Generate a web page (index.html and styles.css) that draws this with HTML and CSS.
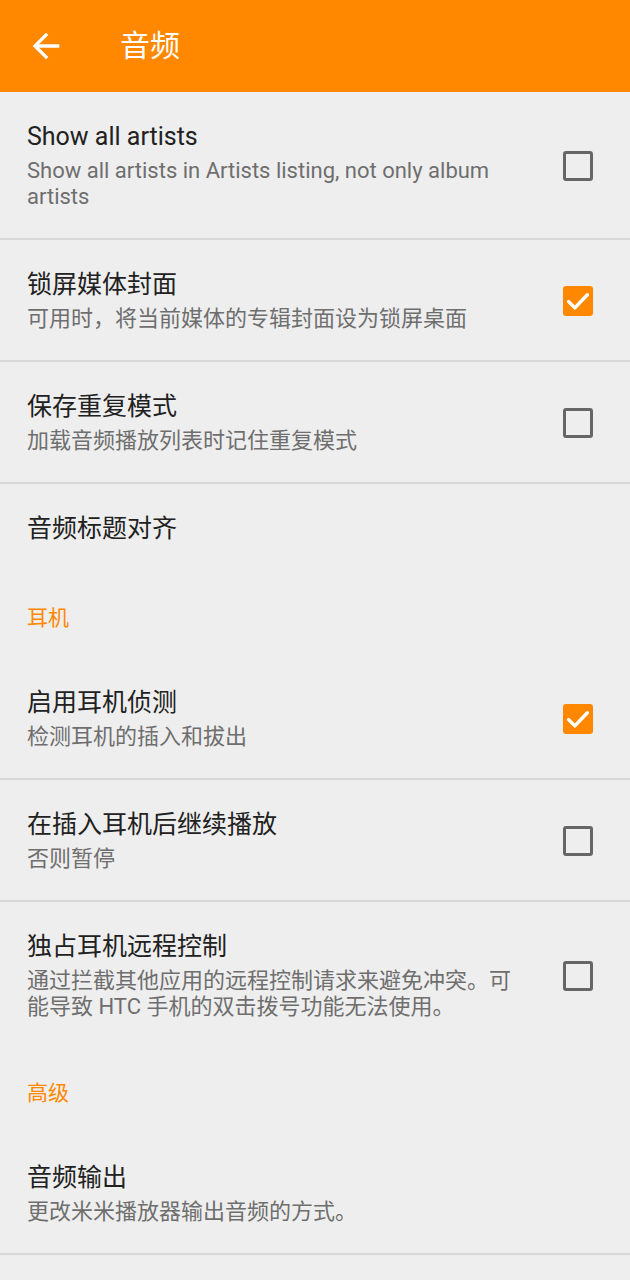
FILE: index.html
```html
<!DOCTYPE html>
<html lang="zh">
<head>
<meta charset="utf-8">
<title>音频</title>
<link rel="stylesheet" href="styles.css">
</head>
<body>
<header class="appbar">
  <svg class="back" viewBox="0 0 24 24" width="40" height="40"><path d="M20 11H7.83l5.59-5.59L12 4l-8 8 8 8 1.41-1.41L7.83 13H20v-2z" fill="#fff"/></svg>
  <h1 class="appbar-title">音频</h1>
</header>
<main class="list">
  <div class="pref divided">
    <div class="text">
      <div class="title">Show all artists</div>
      <div class="summary">Show all artists in Artists listing, not only album artists</div>
    </div>
    <span class="cb"></span>
  </div>
  <div class="pref divided">
    <div class="text">
      <div class="title">锁屏媒体封面</div>
      <div class="summary">可用时，将当前媒体的专辑封面设为锁屏桌面</div>
    </div>
    <span class="cb checked"><svg viewBox="0 0 24 24"><path d="M4.5 12.5l5 5L19.5 7" fill="none" stroke="#fff" stroke-width="2.8" stroke-linecap="round" stroke-linejoin="round"/></svg></span>
  </div>
  <div class="pref divided">
    <div class="text">
      <div class="title">保存重复模式</div>
      <div class="summary">加载音频播放列表时记住重复模式</div>
    </div>
    <span class="cb"></span>
  </div>
  <div class="pref">
    <div class="text">
      <div class="title">音频标题对齐</div>
    </div>
  </div>
  <div class="category">耳机</div>
  <div class="pref divided">
    <div class="text">
      <div class="title">启用耳机侦测</div>
      <div class="summary">检测耳机的插入和拔出</div>
    </div>
    <span class="cb checked"><svg viewBox="0 0 24 24"><path d="M4.5 12.5l5 5L19.5 7" fill="none" stroke="#fff" stroke-width="2.8" stroke-linecap="round" stroke-linejoin="round"/></svg></span>
  </div>
  <div class="pref divided">
    <div class="text">
      <div class="title">在插入耳机后继续播放</div>
      <div class="summary">否则暂停</div>
    </div>
    <span class="cb"></span>
  </div>
  <div class="pref">
    <div class="text">
      <div class="title">独占耳机远程控制</div>
      <div class="summary">通过拦截其他应用的远程控制请求来避免冲突。可能导致 HTC 手机的双击拨号功能无法使用。</div>
    </div>
    <span class="cb"></span>
  </div>
  <div class="category">高级</div>
  <div class="pref divided">
    <div class="text">
      <div class="title">音频输出</div>
      <div class="summary">更改米米播放器输出音频的方式。</div>
    </div>
  </div>
</main>
</body>
</html>
```
FILE: styles.css
```css
* { box-sizing: border-box; }
html, body {
  margin: 0;
  padding: 0;
  background: #eeeeee;
  font-family: Roboto, "Noto Sans CJK SC", sans-serif;
}
.appbar {
  height: 92px;
  background: #ff8800;
  display: flex;
  align-items: center;
  padding-left: 26px;
}
.back { display: block; flex: none; }
.appbar-title {
  margin: 0 0 0 54px;
  color: #fff;
  font-size: 30px;
  font-weight: 400;
  line-height: 40px;
}
.list { display: flex; flex-direction: column; }
.pref {
  display: flex;
  align-items: center;
  padding: 29px 37px 28px 27px;
}
.pref.divided { border-bottom: 2px solid #d8d8d8; }
.text { flex: 1; min-width: 0; margin-right: 44px; }
.title {
  font-size: 25px;
  line-height: 32px;
  color: #212121;
}
.summary {
  margin-top: 5px;
  font-size: 22px;
  line-height: 26px;
  color: #6e6e6e;
}
.cb {
  flex: none;
  width: 30px;
  height: 30px;
  border: 3.5px solid #666;
  border-radius: 3px;
  display: flex;
  align-items: center;
  justify-content: center;
}
.cb.checked {
  background: #ff8800;
  border-color: #ff8800;
}
.cb svg { width: 30px; height: 30px; display: block; flex: none; }
.category {
  padding: 32px 27px 27px;
  font-size: 21px;
  line-height: 26px;
  color: #ff8800;
}
```
